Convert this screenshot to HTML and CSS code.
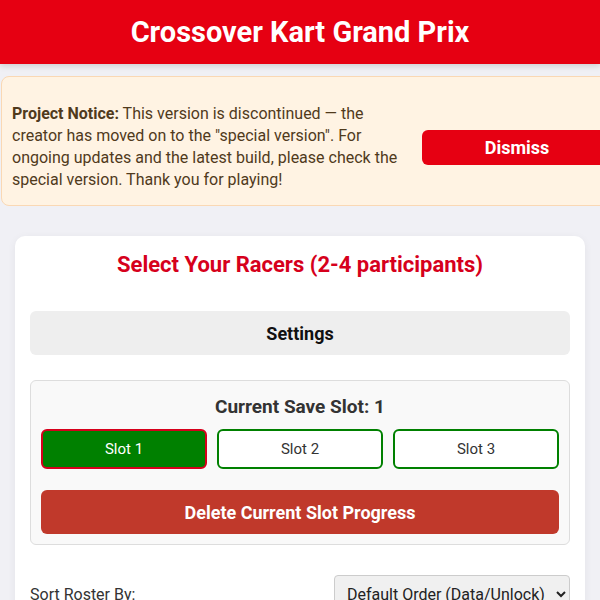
FILE: index.html
```html
<!DOCTYPE html>
<html lang="en">
<head>
    <meta charset="UTF-8">
    <meta name="viewport" content="width=device-width, initial-scale=1.0">
    <title>Crossover Kart Grand Prix</title>
    <link rel="stylesheet" href="styles.css">
</head>
<body>
    <header class="top-bar">
        <h1>Crossover Kart Grand Prix</h1>
    </header>

    <div class="notice" id="projectNotice">
        <p class="notice-text"><strong>Project Notice:</strong> This version is discontinued — the creator has moved on to the "special version". For ongoing updates and the latest build, please check the special version. Thank you for playing!</p>
        <button class="notice-dismiss" type="button">Dismiss</button>
    </div>

    <main class="card">
        <h2 class="card-title">Select Your Racers (2-4 participants)</h2>
        <button class="settings-btn" type="button">Settings</button>

        <section class="save-box">
            <h3 class="save-title">Current Save Slot: <span id="currentSlot">1</span></h3>
            <div class="slot-row">
                <button class="slot-btn active" type="button">Slot 1</button>
                <button class="slot-btn" type="button">Slot 2</button>
                <button class="slot-btn" type="button">Slot 3</button>
            </div>
            <button class="delete-btn" type="button">Delete Current Slot Progress</button>
        </section>

        <div class="sort-row">
            <label for="sortRoster">Sort Roster By:</label>
            <select id="sortRoster">
                <option>Default Order (Data/Unlock)</option>
                <option>Name (A-Z)</option>
                <option>Speed</option>
            </select>
        </div>
    </main>
</body>
</html>
```

FILE: styles.css
```css
body {
    font-family: Roboto, "Liberation Sans", Arial, sans-serif;
    background-color: #f0f0f5;
    margin: 0;
    color: #222;
}
.top-bar {
    background: #e60012;
    height: 64px;
    display: flex;
    align-items: center;
    justify-content: center;
    box-shadow: 0 2px 6px rgba(0, 0, 0, 0.15);
}
.top-bar h1 {
    margin: 0;
    color: white;
    font-size: 29px;
    font-weight: 700;
}
.notice {
    display: flex;
    align-items: center;
    gap: 24px;
    width: 660px;
    margin: 12px 0 0 1px;
    padding: 26px 10px 14px;
    background: #fff3e3;
    border: 1px solid #fad8b4;
    border-radius: 8px;
    box-sizing: border-box;
}
.notice-text {
    margin: 0;
    width: 386px;
    font-size: 16px;
    line-height: 22px;
    color: #503a1c;
}
.notice-dismiss {
    width: 190px;
    height: 35px;
    background: #e60012;
    color: white;
    border: none;
    border-radius: 6px;
    font-family: inherit;
    font-size: 18px;
    font-weight: 700;
}
.card {
    background: white;
    margin: 30px 15px 0;
    padding: 15px;
    border-radius: 10px;
    box-shadow: 0 2px 8px rgba(0, 0, 0, 0.06);
}
.card-title {
    margin: 0 0 33px;
    text-align: center;
    color: #d6001c;
    font-size: 22px;
    line-height: 27px;
    font-weight: 700;
}
.settings-btn {
    display: block;
    width: 100%;
    height: 44px;
    background: #eeeeee;
    border: none;
    border-radius: 6px;
    font-family: inherit;
    font-size: 18px;
    font-weight: 700;
    color: #111;
}
.save-box {
    margin-top: 25px;
    padding: 15px 10px 10px;
    background: #f9f9f9;
    border: 1px solid #dddddd;
    border-radius: 6px;
}
.save-title {
    margin: 0 0 11px;
    text-align: center;
    font-size: 19px;
    line-height: 22px;
    font-weight: 700;
    color: #333;
}
.slot-row {
    display: grid;
    grid-template-columns: repeat(3, 1fr);
    gap: 10px;
}
.slot-btn {
    height: 40px;
    background: white;
    border: 2px solid #008000;
    border-radius: 6px;
    font-family: inherit;
    font-size: 15px;
    color: #333;
}
.slot-btn.active {
    background: #008000;
    border-color: #d6001c;
    color: white;
}
.delete-btn {
    display: block;
    width: 100%;
    height: 44px;
    margin-top: 21px;
    background: #c0392b;
    color: white;
    border: none;
    border-radius: 6px;
    font-family: inherit;
    font-size: 18px;
    font-weight: 700;
}
.sort-row {
    display: flex;
    justify-content: space-between;
    align-items: center;
    margin-top: 30px;
    font-size: 16px;
    color: #333;
}
.sort-row select {
    width: 236px;
    height: 38px;
    padding: 0 8px;
    background: #f0f0f0;
    border: 1px solid #cccccc;
    border-radius: 4px;
    font-family: inherit;
    font-size: 16px;
    color: #222;
}
```
